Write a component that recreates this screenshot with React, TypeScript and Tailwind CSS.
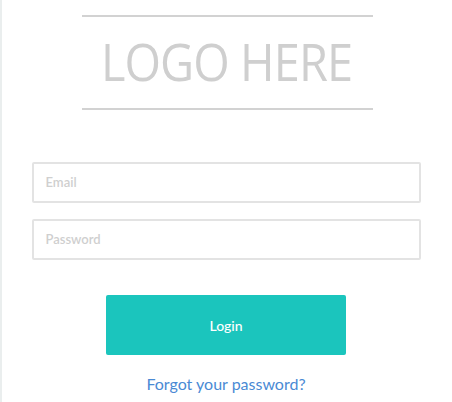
import React from "react";

export default function App() {
  return (
    <div className="w-[452px] h-[402px] bg-white flex overflow-hidden" style={{ fontFamily: '"Open Sans", "Liberation Sans", sans-serif' }}>
      <div className="w-[2px] h-full bg-[#eaeeee] shrink-0" />
      <div className="flex-1 flex flex-col items-center">
        <div className="mt-[15px] w-[291px] flex flex-col items-center">
          <div className="w-full h-[2px] bg-[#d2d2d2]" />
          <div className="h-[91px] flex items-center justify-center">
            <span className="inline-block text-[51px] leading-none text-[#cfcfcf] font-normal tracking-[-1px] scale-x-[0.92] mt-[-3px]" style={{ fontFamily: '"Open Sans", sans-serif' }}>LOGO HERE</span>
          </div>
          <div className="w-full h-[2px] bg-[#d2d2d2]" />
        </div>
        <div className="mt-[52px] w-[389px] ml-[-2px] flex flex-col gap-[16px]">
          <div className="h-[41px] border-2 border-[#e3e3e3] rounded-[2px] flex items-center pl-[12px] text-[13px] font-semibold text-[#cfcfcf]" style={{ fontFamily: '"Lato", sans-serif' }}>Email</div>
          <div className="h-[41px] border-2 border-[#e3e3e3] rounded-[2px] flex items-center pl-[12px] text-[13px] font-semibold text-[#cfcfcf]" style={{ fontFamily: '"Lato", sans-serif' }}>Password</div>
        </div>
        <button className="mt-[35px] w-[240px] h-[60px] bg-[#1bc5bd] rounded-[2px] text-white text-[14px] font-medium ml-[-2px]" style={{ fontFamily: '"Lato", sans-serif' }}>Login</button>
        <div className="mt-[17px] text-[16px] text-[#4a8ad4] ml-[-2px]" style={{ fontFamily: '"Lato", sans-serif' }}>Forgot your password?</div>
      </div>
    </div>
  );
}
